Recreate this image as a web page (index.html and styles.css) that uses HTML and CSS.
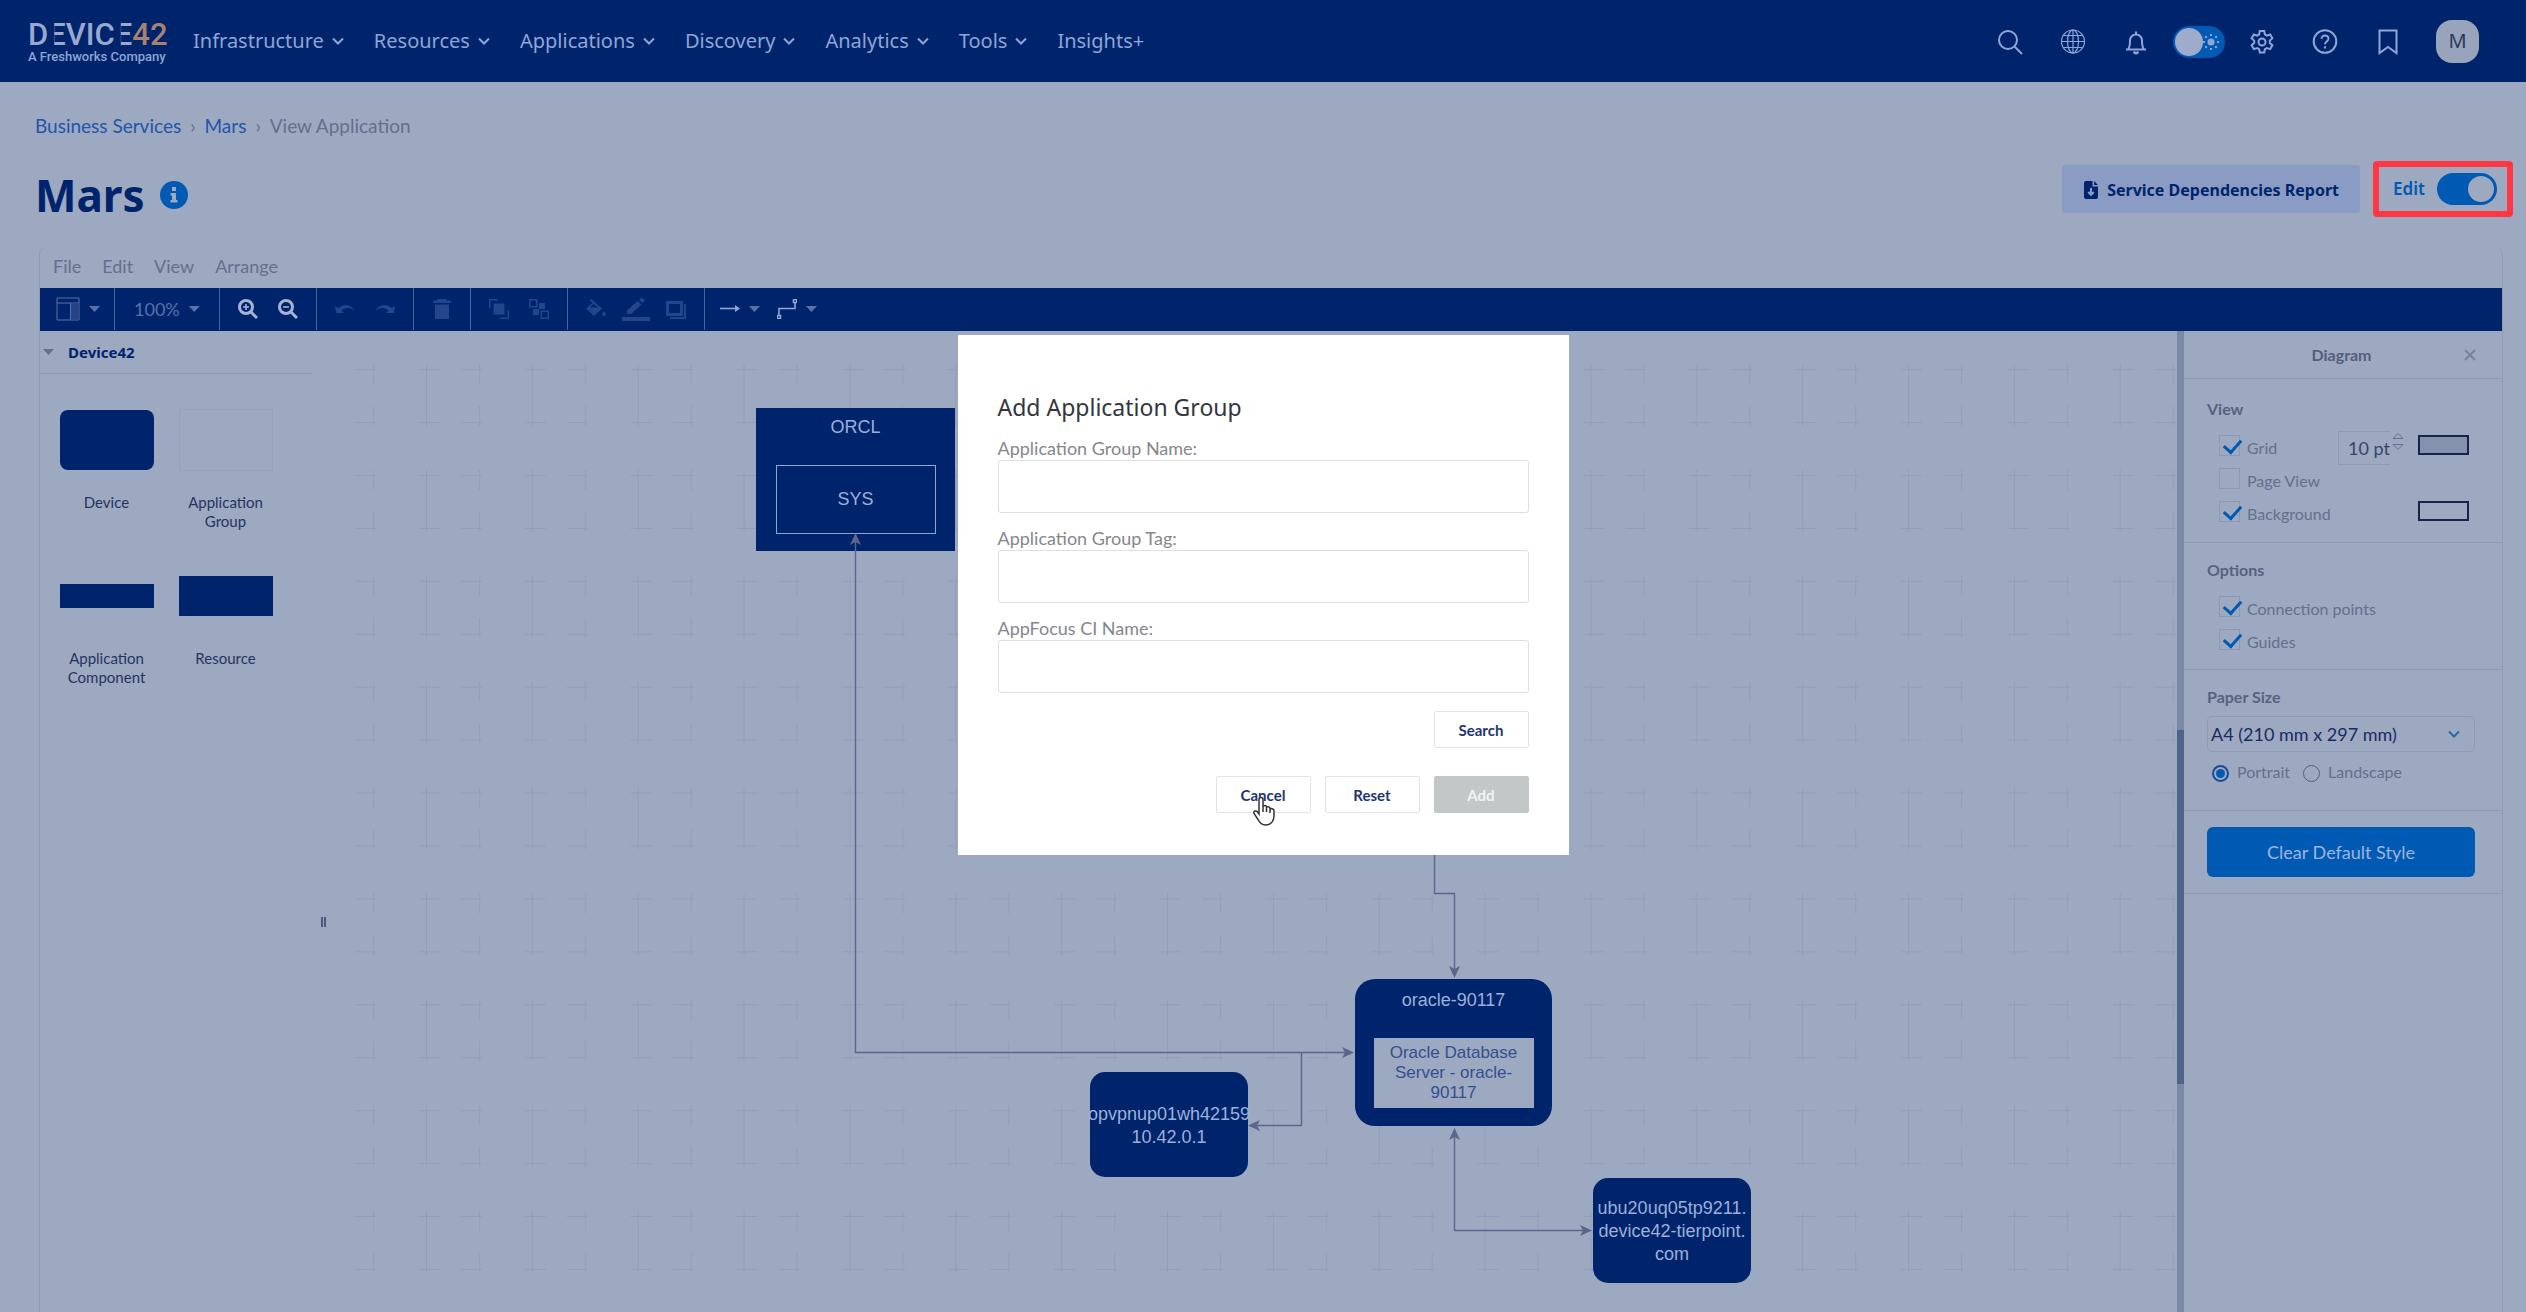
FILE: index.html
```html
<!DOCTYPE html>
<html lang="en">
<head>
<meta charset="utf-8">
<meta name="viewport" content="width=device-width, initial-scale=1">
<title>Mars - View Application</title>
<link rel="stylesheet" href="styles.css">
</head>
<body>
<header class="topbar">
  <a class="logo" href="#" aria-label="Device42, a Freshworks company">
    <span class="logo-name">D<span class="bars">E</span>VIC<span class="bars">E</span><span class="logo-num">42</span></span>
    <span class="logo-sub">A Freshworks Company</span>
  </a>
  <nav class="mainnav">
    <a href="#">Infrastructure <svg class="chev" viewBox="0 0 12 8"><path d="M1 1.5l5 5 5-5"/></svg></a>
    <a href="#">Resources <svg class="chev" viewBox="0 0 12 8"><path d="M1 1.5l5 5 5-5"/></svg></a>
    <a href="#">Applications <svg class="chev" viewBox="0 0 12 8"><path d="M1 1.5l5 5 5-5"/></svg></a>
    <a href="#">Discovery <svg class="chev" viewBox="0 0 12 8"><path d="M1 1.5l5 5 5-5"/></svg></a>
    <a href="#">Analytics <svg class="chev" viewBox="0 0 12 8"><path d="M1 1.5l5 5 5-5"/></svg></a>
    <a href="#">Tools <svg class="chev" viewBox="0 0 12 8"><path d="M1 1.5l5 5 5-5"/></svg></a>
    <a href="#">Insights+</a>
  </nav>
  <div class="tools">
    <button class="tool" aria-label="Search"><svg viewBox="0 0 26 26"><circle cx="11" cy="11" r="9"/><path d="M17.500 17.500L25 25"/></svg></button>
    <button class="tool" aria-label="Language"><svg class="thin" viewBox="0 0 26 26"><circle cx="13" cy="12.500" r="11.500"/><ellipse cx="13" cy="12.500" rx="5.500" ry="11.500"/><path d="M13 1v23M1.500 12.500h23M3.500 6.500h19M3.500 18.500h19"/></svg></button>
    <button class="tool" aria-label="Notifications"><svg viewBox="0 0 26 26"><path d="M3 20.500h20M5 20.500c2-2.500 2-5 2-9a6 6 0 0 1 12 0c0 4 0 6.500 2 9M13 5.500V2.500"/><path class="solid" d="M10 22.500h6a3 3 0 0 1-6 0z"/></svg></button>
    <label class="tool"><input class="theme" type="checkbox" aria-label="Light theme"><svg class="sun" viewBox="0 0 18 18"><circle class="solid" cx="9" cy="9" r="3.500"/><path d="M9 1v2M9 15v2M1 9h2M15 9h2M3.300 3.300l1.400 1.400M13.300 13.300l1.400 1.400M3.300 14.700l1.400-1.400M13.300 4.700l1.400-1.400"/></svg></label>
    <button class="tool" aria-label="Settings"><svg viewBox="0 0 26 26"><path d="M10.800 2h4.400l.7 3.400 2 1.200 3.300-1.100 2.200 3.800-2.600 2.300v2.400l2.600 2.300-2.200 3.800-3.300-1.100-2 1.200-.7 3.400h-4.400l-.7-3.400-2-1.200-3.300 1.100-2.200-3.800 2.600-2.300v-2.400L2.600 9.300l2.200-3.800 3.300 1.100 2-1.200z"/><circle cx="13" cy="13" r="3.500"/></svg></button>
    <button class="tool" aria-label="Help"><svg viewBox="0 0 26 26"><circle cx="13" cy="12.500" r="11.300"/><path d="M9.500 9.800c0-4.500 7.200-4.300 7 0-.2 2.700-3.500 2.600-3.500 5.400M13 17.300v2.300"/></svg></button>
    <button class="tool" aria-label="Bookmarks"><svg viewBox="0 0 26 26"><path d="M4.500 1.500h17v22.500L13 18l-8.500 6z"/></svg></button>
    <button class="avatar">M</button>
  </div>
</header>

<main>
  <nav class="crumbs" aria-label="Breadcrumb"><a href="#">Business Services</a><span>›</span><a href="#">Mars</a><span>›</span><span>View Application</span></nav>
  <div class="titlerow">
    <div class="heading">
      <h1>Mars</h1>
      <svg class="info" viewBox="0 0 28 28"><circle cx="14" cy="14" r="14"/><path d="M12 6h4v4h-4zM10.500 12H16v7h1.500v2.500h-7V19H12v-4.500h-1.500z"/></svg>
    </div>
    <button class="report"><svg viewBox="0 0 14 18"><path class="page" d="M2 0h6.500v5.500H14V16a2 2 0 0 1-2 2H2a2 2 0 0 1-2-2V2a2 2 0 0 1 2-2zM10 0l4 4h-4z"/><path class="down" d="M7 7v6.500M4.200 11L7 13.800 9.800 11"/></svg>Service Dependencies Report</button>
    <label class="editmode">Edit <input class="switch" type="checkbox" checked></label>
  </div>

  <section class="editor">
    <div class="menubar"><button>File</button><button>Edit</button><button>View</button><button>Arrange</button></div>
    <div class="toolbar">
      <div class="group layout"><button class="drop" aria-label="Layout"><svg class="i24" viewBox="0 0 24 24"><path d="M1 1h22v22H1zM1 6h22M14.500 6v17"/><path class="dim" d="M15 6.500h7.500v16H15z"/></svg><i class="caret"></i></button></div>
      <div class="group zoomlevel"><button class="drop">100%<i class="caret"></i></button></div>
      <div class="group">
        <button aria-label="Zoom in"><svg class="i20 bold" viewBox="0 0 20 20"><circle cx="8" cy="8" r="6.500"/><path d="M12.500 12.500L19 19"/><path class="fine" d="M8 5v6M5 8h6"/></svg></button>
        <button aria-label="Zoom out"><svg class="i20 bold" viewBox="0 0 20 20"><circle cx="8" cy="8" r="6.500"/><path d="M12.500 12.500L19 19"/><path class="fine" d="M5 8h6"/></svg></button>
      </div>
      <div class="group">
        <button disabled aria-label="Undo"><svg class="i20 off" viewBox="0 0 20 20"><path d="M0 7l1 7h8L6.500 11.500C10 8 15 8 20 12 16 5 9 4 3.500 9z"/></svg></button>
        <button disabled aria-label="Redo"><svg class="i20 off" viewBox="0 0 20 20"><path d="M20 7l-1 7h-8l2.500-2.500C10 8 5 8 0 12 4 5 11 4 16.500 9z"/></svg></button>
      </div>
      <div class="group"><button disabled aria-label="Delete"><svg class="i20 off" viewBox="0 0 20 20"><path d="M6 0h8l1 1.500h4V4H1V1.500h4zM3 5.500h14V20H3z"/></svg></button></div>
      <div class="group">
        <button disabled aria-label="To front"><svg class="i20 off" viewBox="0 0 20 20"><path d="M4.500 4.500h11v11h-11zM0 0h9v1.500H1.500V9H0zM18.500 11H20v9h-9v-1.500h7.500z"/></svg></button>
        <button disabled aria-label="To back"><svg class="i20 off" viewBox="0 0 20 20"><path fill-rule="evenodd" d="M10 4h6v6h-6zM4 10h6v6H4zM0 0h8.500v8.500H0zM1.500 1.500V7H7V1.500zM11.500 11.500H20V20h-8.500zM13 13v5.500h5.500V13z"/></svg></button>
      </div>
      <div class="group">
        <button disabled aria-label="Fill colour"><svg class="i20 off" viewBox="0 0 20 20"><path fill-rule="evenodd" d="M5 0l11 9.500L8 17 0 9.500 6.500 4 3.500 1.500zM7.500 5L4 8.500h8zM18 12c3 4 2 5 0 5s-2.500-2 0-5z"/></svg></button>
        <button disabled aria-label="Line colour"><svg class="i28 off" viewBox="0 0 28 24"><path d="M17 3l2.500-2.500L23 3l-2.500 3zM5 17v-3.500L15.500 4l4 3.500L9 17zM0 20h28v4H0z"/></svg></button>
        <button disabled aria-label="Shadow"><svg class="i20 off" viewBox="0 0 20 20"><path fill-rule="evenodd" d="M0 2h17v15H0zM3 5v9h11V5zM18 5h2v15H4v-2h14z"/></svg></button>
      </div>
      <div class="group last">
        <button class="drop" aria-label="Connection"><svg class="i20 fine" viewBox="0 0 20 20"><path d="M0 9.500h17"/><path class="solid" d="M15 6l5 3.500-5 3.500z"/></svg><i class="caret"></i></button>
        <button class="drop" aria-label="Waypoints"><svg class="i20 fine" viewBox="0 0 20 20"><path d="M2 16v-6.500h16V3M16.500.500h3v3h-3zM.500 16.500h3v3h-3z"/></svg><i class="caret"></i></button>
      </div>
    </div>

    <div class="workspace">
      <aside class="shapes">
        <h2><i class="caret"></i>Device42</h2>
        <div class="palette">
          <figure><div class="slot"><div class="shape device"></div></div><figcaption>Device</figcaption></figure>
          <figure><div class="slot"><div class="shape appgroup"></div></div><figcaption>Application Group</figcaption></figure>
          <figure><div class="slot"><div class="shape component"></div></div><figcaption>Application Component</figcaption></figure>
          <figure><div class="slot"><div class="shape resource"></div></div><figcaption>Resource</figcaption></figure>
        </div>
        <div class="grip"></div>
      </aside>

      <div class="canvas">
        <svg class="wires" width="100%" height="100%">
          <defs>
            <pattern id="grid" x="87" y="134" width="105.860" height="105.860" patternUnits="userSpaceOnUse">
              <path d="M10.500 5v62M63.500 5v20M63.500 47v20M3 10.500h21M45 10.500h21M3 63.500h21M45 63.500h21"/>
            </pattern>
          </defs>
          <rect class="gridfill" x="26" y="0" width="100%" height="100%"/>
        </svg>
        <div class="node orcl"><span>ORCL</span><div class="inner">SYS</div></div>
        <div class="node round oracle"><span>oracle-90117</span><div class="inner">Oracle Database Server - oracle-90117</div></div>
        <div class="node round vpn"><span>opvpnup01wh42159</span><span>10.42.0.1</span></div>
        <div class="node round ubu"><span>ubu20uq05tp9211.</span><span>device42-tierpoint.</span><span>com</span></div>
        <svg class="wires edges" width="100%" height="100%">
          <path d="M526.500 204V721.500H1020M972.500 721.500V794.500H922M1105.500 500V562.500H1125.500V644M1125.500 800V899.500H1260"/>
          <path class="tip" d="M526.500 202l5.500 12-5.500-3-5.500 3zM1025 721.500l-12 5.500 3-5.500-3-5.500zM919 794.500l12-5.500-3 5.500 3 5.500zM1125.500 647l-5.500-12 5.500 3 5.500-3zM1125.500 797l5.500 12-5.500-3-5.500 3zM1263 899.500l-12 5.500 3-5.500-3-5.500z"/>
        </svg>
      </div>
      <div class="scroll"><div class="thumb"></div></div>

      <aside class="format">
        <div class="fhead"><span>Diagram</span><button aria-label="Close"><svg viewBox="0 0 12 12"><path d="M1 1l10 10M11 1L1 11"/></svg></button></div>
        <section class="view">
          <h3>View</h3>
          <div class="row"><label><input type="checkbox" checked>Grid</label>
            <div class="step"><input type="text" value="10 pt" aria-label="Grid size"><svg viewBox="0 0 12 20"><path d="M1 6.500L6 1.500l5 5zM1 12.500h10l-5 5z"/></svg></div>
            <button class="swatch grey" aria-label="Grid colour"></button></div>
          <div class="row"><label><input type="checkbox">Page View</label></div>
          <div class="row"><label><input type="checkbox" checked>Background</label><button class="swatch" aria-label="Background colour"></button></div>
        </section>
        <section class="options">
          <h3>Options</h3>
          <div class="row"><label><input type="checkbox" checked>Connection points</label></div>
          <div class="row"><label><input type="checkbox" checked>Guides</label></div>
        </section>
        <section class="paper">
          <h3><label for="paper">Paper Size</label></h3>
          <div class="pick"><select id="paper"><option>A4 (210 mm x 297 mm)</option></select><svg class="chev" viewBox="0 0 12 8"><path d="M1 1.500l5 5 5-5"/></svg></div>
          <div class="radios"><label><input type="radio" name="orient" checked>Portrait</label><label><input type="radio" name="orient">Landscape</label></div>
        </section>
        <section class="clear"><button>Clear Default Style</button></section>
      </aside>
    </div>
  </section>
</main>

<div class="overlay">
  <form class="dialog" role="dialog" aria-labelledby="dlg">
    <h2 id="dlg">Add Application Group</h2>
    <label for="gname">Application Group Name:</label><input id="gname" type="text">
    <label for="gtag">Application Group Tag:</label><input id="gtag" type="text">
    <label for="ciname">AppFocus CI Name:</label><input id="ciname" type="text">
    <div class="actions"><button type="button">Search</button></div>
    <div class="actions confirm"><button type="button">Cancel
      <svg class="pointer" viewBox="0 0 24 30"><path d="M7 18V3.500a2 2 0 0 1 4 0V11c0-2 3.500-2 3.500 0v1c0-2 3.500-1.500 3.500.500v1c.5-1.500 4-1 4 1.500V20c0 5-3 9-8.500 9-4 0-6-2.500-7.500-5.500L2 17.500C1 15 4 14 5.500 16zM11 11v5M14.500 12v4M18 13v4"/></svg></button><button type="button">Reset</button><button class="primary" type="button" disabled>Add</button></div>
  </form>
</div>
</body>
</html>
```

FILE: styles.css
```css
:root {
  --bg: #9da8c1;
  --navy: #00246c;
  --pale: #8fa5d6;
  --blue: #005ab4;
  --line: #8f9ab6;
  --grey: #64708c;
  --head: "Noto Sans", sans-serif;
  --body: Lato, "Noto Sans", sans-serif;
}
* { box-sizing: border-box; }
body { margin: 0; min-height: 100vh; display: flex; flex-direction: column; background: var(--bg); color: var(--grey); font: 18px/24px var(--body); }
button, input, select { font: inherit; color: inherit; margin: 0; padding: 0; background: none; border: 0; }
h1, h2, h3, figure { margin: 0; }
a { text-decoration: none; color: inherit; }
svg { display: block; fill: none; stroke: currentColor; flex: none; }

/* top bar */
.topbar { display: flex; align-items: center; height: 82px; padding: 0 47px 0 28px; background: var(--navy); color: var(--pale); }
.logo { width: 165px; flex: none; display: flex; flex-direction: column; padding-top: 3px; }
.logo-name { font: 500 31px/28px Roboto, sans-serif; color: #98a8cf; white-space: nowrap; }
.bars { display: inline-block; clip-path: inset(0 0 0 6px); }
.logo-num { color: #a8826f; }
.logo-sub { font: 500 13px/16px Roboto, sans-serif; white-space: nowrap; }
.mainnav { display: flex; gap: 30px; font: 400 20px/28px var(--head); }
.mainnav a { display: flex; align-items: center; gap: 8px; }
.chev { width: 12px; height: 8px; stroke-width: 2; }
.tools { display: flex; align-items: center; margin-left: auto; }
.tool { display: flex; justify-content: center; align-items: center; width: 63px; height: 44px; padding-top: 2px; position: relative; }
.tool svg { width: 26px; height: 26px; stroke-width: 2; }
.tool .thin { stroke-width: 1.2; }
.solid { fill: currentColor; stroke: none; }
.theme { appearance: none; width: 52px; height: 32px; border-radius: 16px; background: var(--blue); padding: 2px; }
.theme::before { content: ""; display: block; width: 28px; height: 28px; border-radius: 50%; background: #9eabcb; }
.tool .sun { position: absolute; right: 10px; width: 18px; height: 18px; stroke-width: 2; }
.avatar { width: 43px; height: 43px; margin-left: 17px; border-radius: 16px; background: #98a3bc; color: #2b3a5e; font: 20px/40px var(--head); }

/* page heading */
.crumbs { display: flex; gap: 9px; padding: 30px 0 0 35px; font-size: 19px; line-height: 28px; }
.crumbs a { color: #2355ab; }
.titlerow { display: flex; align-items: center; height: 56px; margin: 21px 13px 30px 35px; }
.heading { display: flex; align-items: center; gap: 15px; padding-top: 12px; }
h1 { font: 700 44px/56px var(--head); color: var(--navy); }
.info { width: 28px; height: 28px; stroke: none; }
.info circle { fill: var(--blue); }
.info path { fill: var(--bg); }
.report { display: flex; align-items: center; gap: 9px; height: 48px; margin-left: auto; padding: 2px 21px 0 22px; background: #8b9cc4; border-radius: 3px; color: var(--navy); font: 700 16px/24px var(--head); }
.report svg { width: 14px; height: 18px; stroke: none; }
.page { fill: currentColor; }
.down { stroke: #8b9cc4; stroke-width: 2; }
.editmode { display: flex; align-items: center; justify-content: space-between; width: 140px; height: 56px; margin-left: 13px; padding: 0 10px 0 14px; border: 6px solid #ff3742; border-radius: 4px; color: var(--blue); font: 600 17px/24px var(--head); }
.switch { appearance: none; width: 60px; height: 32px; border-radius: 16px; background: var(--blue); padding: 3px; }
.switch::before { content: ""; display: block; width: 26px; height: 26px; margin-left: auto; border-radius: 50%; background: var(--bg); }

/* editor */
main { flex: 1; display: flex; flex-direction: column; }
.editor { flex: 1; display: flex; flex-direction: column; margin: 0 23px 0 39px; border: 1px solid var(--line); border-width: 0 1px; border-radius: 8px 8px 0 0; }
.menubar { display: flex; gap: 21px; height: 41px; padding: 0 13px 4px; }
.toolbar { display: flex; height: 43px; padding-bottom: 1px; background: var(--navy); color: #5871a8; }
.group { display: flex; align-items: center; padding: 0 8px; border-right: 1px solid #4a649f; }
.group button { display: flex; justify-content: center; align-items: center; width: 40px; height: 40px; color: #a5b3d3; }
.group .drop { width: auto; gap: 9px; color: inherit; }
.layout { width: 75px; padding: 0 16px; }
.zoomlevel { width: 105px; padding: 0 17px 0 19px; }
.last { border: 0; padding: 0 15px; gap: 17px; }
.last .drop svg { color: #8fa5d6; }
.i20 { width: 20px; height: 20px; }
.i24 { width: 24px; height: 24px; }
.i28 { width: 28px; height: 24px; }
.bold { stroke-width: 3; }
.fine { stroke-width: 1.6; }
.dim { fill: #24448a; stroke: none; }
.group .off { fill: #23458a; stroke: none; }
.caret { width: 11px; height: 6px; background: currentColor; clip-path: polygon(0 0, 100% 0, 50% 100%); }
.workspace { flex: 1; display: flex; }
.shapes { position: relative; width: 289px; flex: none; }
.shapes h2 { display: flex; align-items: center; gap: 14px; width: 273px; height: 43px; padding-left: 3px; border-bottom: 1px solid var(--line); color: var(--navy); font: 700 15px/24px var(--head); }
.shapes h2 .caret { color: var(--grey); }
.palette { display: grid; grid-template-columns: 119px 119px; grid-auto-rows: 156px; padding: 35px 0 0 7px; }
.palette figcaption { width: 96px; margin: 0 auto; text-align: center; color: #26355f; font-size: 15px; line-height: 19px; }
.slot { display: flex; align-items: center; justify-content: center; height: 62px; margin-bottom: 22px; }
.shape { width: 94px; background: var(--navy); }
.device { height: 60px; border-radius: 8px; }
.appgroup { height: 62px; border: 1px solid #96a1bd; background: none; }
.component { height: 24px; }
.resource { height: 40px; }
.grip { position: absolute; left: 281px; top: 586px; width: 5px; height: 10px; border: 2px solid #4a587c; border-width: 0 2px; }
.canvas { position: relative; flex: 1; overflow: hidden; }
.wires { position: absolute; inset: 0; }
.gridfill { fill: url(#grid); stroke: none; }
pattern path { stroke: #929db9; }
.edges { stroke: #5a678a; stroke-width: 1.4; }
.tip { fill: #5a678a; stroke: none; }
.node { position: absolute; display: flex; flex-direction: column; align-items: center; justify-content: center; background: var(--navy); color: #9db0da; font: 18px/23px "Liberation Sans", sans-serif; white-space: nowrap; }
.round { border-radius: 15px; }
.orcl { left: 427px; top: 77px; width: 199px; height: 143px; justify-content: flex-start; padding-top: 8px; }
.orcl .inner { width: 160px; height: 69px; margin-top: 26px; border: 1px solid var(--pale); line-height: 67px; text-align: center; }
.oracle { left: 1026px; top: 648px; width: 197px; height: 147px; border-radius: 20px; justify-content: flex-start; padding-top: 10px; }
.oracle .inner { width: 160px; height: 70px; margin-top: 26px; padding: 5px 12px; background: var(--bg); color: #34508e; font-size: 17px; line-height: 20px; text-align: center; white-space: normal; }
.vpn { left: 761px; top: 741px; width: 158px; height: 105px; padding-top: 2px; }
.ubu { left: 1264px; top: 847px; width: 158px; height: 105px; padding-top: 2px; }
.scroll { width: 7px; background: #7b88a6; }
.thumb { height: 354px; margin-top: 399px; background: #50648a; }

/* format panel */
.format { width: 318px; flex: none; font-size: 16px; }
.fhead { display: grid; grid-template-columns: 1fr auto; align-items: center; height: 48px; padding: 0 26px 0 35px; border-bottom: 1px solid var(--line); text-align: center; color: #53607f; font-weight: 700; }
.fhead svg { width: 12px; height: 12px; stroke-width: 2; color: #76829f; }
.format section { padding: 0 27px 0 23px; border-bottom: 1px solid var(--line); }
.format h3 { font-size: 16px; line-height: 24px; color: #56637f; }
.format .view { height: 164px; padding-top: 18px; }
.view h3 { margin-bottom: 10px; }
.row { display: flex; align-items: center; height: 33px; padding-left: 12px; }
.row label { display: flex; align-items: center; gap: 7px; margin-right: auto; }
.row input[type=checkbox] { appearance: none; width: 21px; height: 21px; margin-bottom: 4px; border: 1px solid #8d98b3; }
.row input:checked::before { content: ""; display: block; width: 8px; height: 14px; margin: 0 0 0 7px; border: solid var(--blue); border-width: 0 3px 3px 0; transform: rotate(42deg); }
.step { display: flex; align-items: center; gap: 2px; margin-right: 14px; }
.step input { width: 52px; height: 34px; padding-left: 9px; border: 1px solid var(--line); border-right: 0; font-size: 18px; color: #36466d; }
.step svg { width: 12px; height: 20px; margin-bottom: 12px; }
.swatch { width: 51px; height: 20px; margin-right: 6px; margin-bottom: 6px; border: 2px solid #17254c; }
.grey { background: #8592ae; }
.format .options { height: 127px; padding-top: 15px; }
.options h3 { margin-bottom: 10px; }
.format .paper { height: 141px; padding-top: 15px; }
.pick { display: grid; align-items: center; margin-top: 7px; color: #182c60; font-size: 18px; }
.pick > * { grid-area: 1 / 1; }
.pick select { appearance: none; height: 36px; padding-left: 3px; border: 1px solid var(--line); border-radius: 5px; }
.pick .chev { justify-self: end; margin-right: 15px; color: #2a6aa0; }
.radios { display: flex; gap: 13px; margin-top: 8px; padding-left: 5px; }
.radios label { display: flex; align-items: center; gap: 8px; }
.radios input { appearance: none; width: 17px; height: 17px; margin-top: 3px; border: 1px solid #53607f; border-radius: 50%; padding: 3px; }
.radios input:checked { border: 2px solid #1b4a98; padding: 2px; }
.radios input:checked::before { content: ""; display: block; height: 9px; border-radius: 50%; background: var(--blue); }
.format .clear { height: 83px; padding-top: 16px; }
.clear button { width: 100%; height: 50px; border-radius: 6px; background: var(--blue); color: #9fb4dc; font-size: 18px; }

/* dialog */
.overlay { position: fixed; inset: 0; display: flex; justify-content: center; align-items: flex-start; padding-top: 335px; }
.dialog { display: flex; flex-direction: column; width: 611px; padding: 57px 40px 42px; background: #fff; }
.dialog h2 { margin-bottom: 14px; font: 400 23px/30px var(--head); color: #33363c; }
.dialog label { line-height: 24px; color: #85878b; }
.dialog input { height: 53px; margin-bottom: 13px; border: 1px solid #dedfe1; border-radius: 3px; }
.actions { display: flex; justify-content: flex-end; gap: 14px; margin-top: 5px; }
.confirm { margin-top: 28px; }
.actions button { position: relative; width: 95px; height: 37px; border: 1px solid #e2e3e5; border-radius: 2px; color: #1d3673; font-size: 15px; font-weight: 700; }
.actions .primary { background: #c4c7c8; border-color: #c4c7c8; color: #f2f3f4; }
.pointer { position: absolute; left: 35px; top: 19px; width: 24px; height: 30px; }
.pointer path { fill: #fff; stroke: #333; stroke-width: 1.5; }
```
